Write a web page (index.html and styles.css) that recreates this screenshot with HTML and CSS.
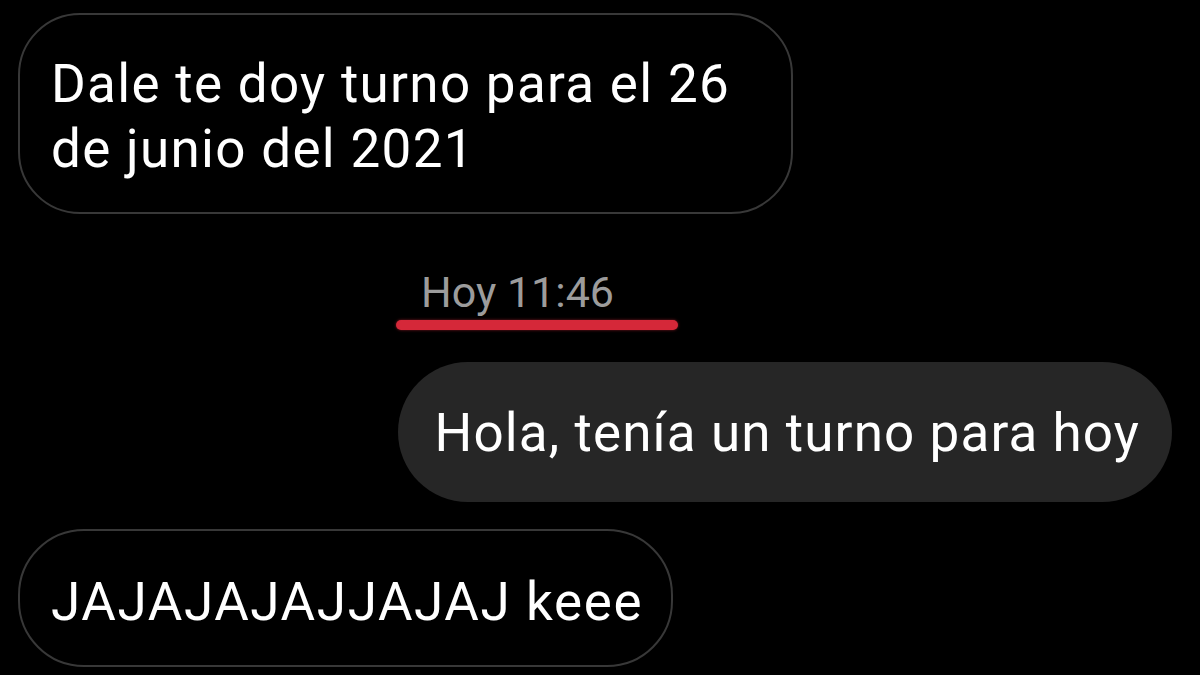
FILE: index.html
```html
<!DOCTYPE html>
<html lang="es">
<head>
  <meta charset="UTF-8" />
  <meta name="viewport" content="width=device-width, initial-scale=1.0" />
  <title>Chat</title>
  <link rel="stylesheet" href="styles.css">
</head>
<body>
  <div class="chat">
    <!-- Received message -->
    <div class="bubble incoming first">Dale te doy turno para el 26 de junio del 2021</div>

    <!-- Day separator, marked by hand -->
    <div class="stamp">
      <div class="stamp-text">Hoy 11:46</div>
      <div class="stamp-mark"></div>
    </div>

    <!-- Sent message -->
    <div class="bubble outgoing">Hola, tenía un turno para hoy</div>

    <div class="bubble incoming last">JAJAJAJAJJAJAJ keee</div>
  </div>
</body>
</html>
```

FILE: styles.css
```css
/* Reset and basic styles */
* {
  margin: 0;
  padding: 0;
  box-sizing: border-box;
}
body {
  background: #000;
  color: #fff;
  font-family: Roboto, 'Noto Sans', sans-serif;
  overflow: hidden;
  height: 675px;
}
/* Message list */
.chat {
  display: flex;
  flex-direction: column;
  align-items: flex-start;
  padding: 13px 28px 0 18px;
}
.bubble {
  font-size: 53px;
  line-height: 65px;
  letter-spacing: 1.3px;
  border-radius: 62px;
}
.incoming {
  border: 2px solid #383838;
  padding: 37px 40px 30px 31px;
}
.first {
  width: 775px;
}
.last {
  margin-top: 27px;
  padding: 39px 28px 30px 31px;
  letter-spacing: 1.6px;
  border-radius: 66px;
}
.outgoing {
  align-self: flex-end;
  background: #262626;
  margin-top: 32px;
  padding: 39px 32px 36px 37px;
  letter-spacing: 1.1px;
  border-radius: 70px;
}
/* Timestamp separator */
.stamp {
  margin: 53px 0 0 378px;
}
.stamp-text {
  font-size: 43px;
  line-height: 50px;
  color: #9c9c9c;
  padding-left: 25px;
}
.stamp-mark {
  width: 282px;
  height: 10px;
  margin-top: 3px;
  background: #d52839;
  border-radius: 5px;
  box-shadow: 0 0 3px rgba(213, 40, 57, 0.6);
}
```
